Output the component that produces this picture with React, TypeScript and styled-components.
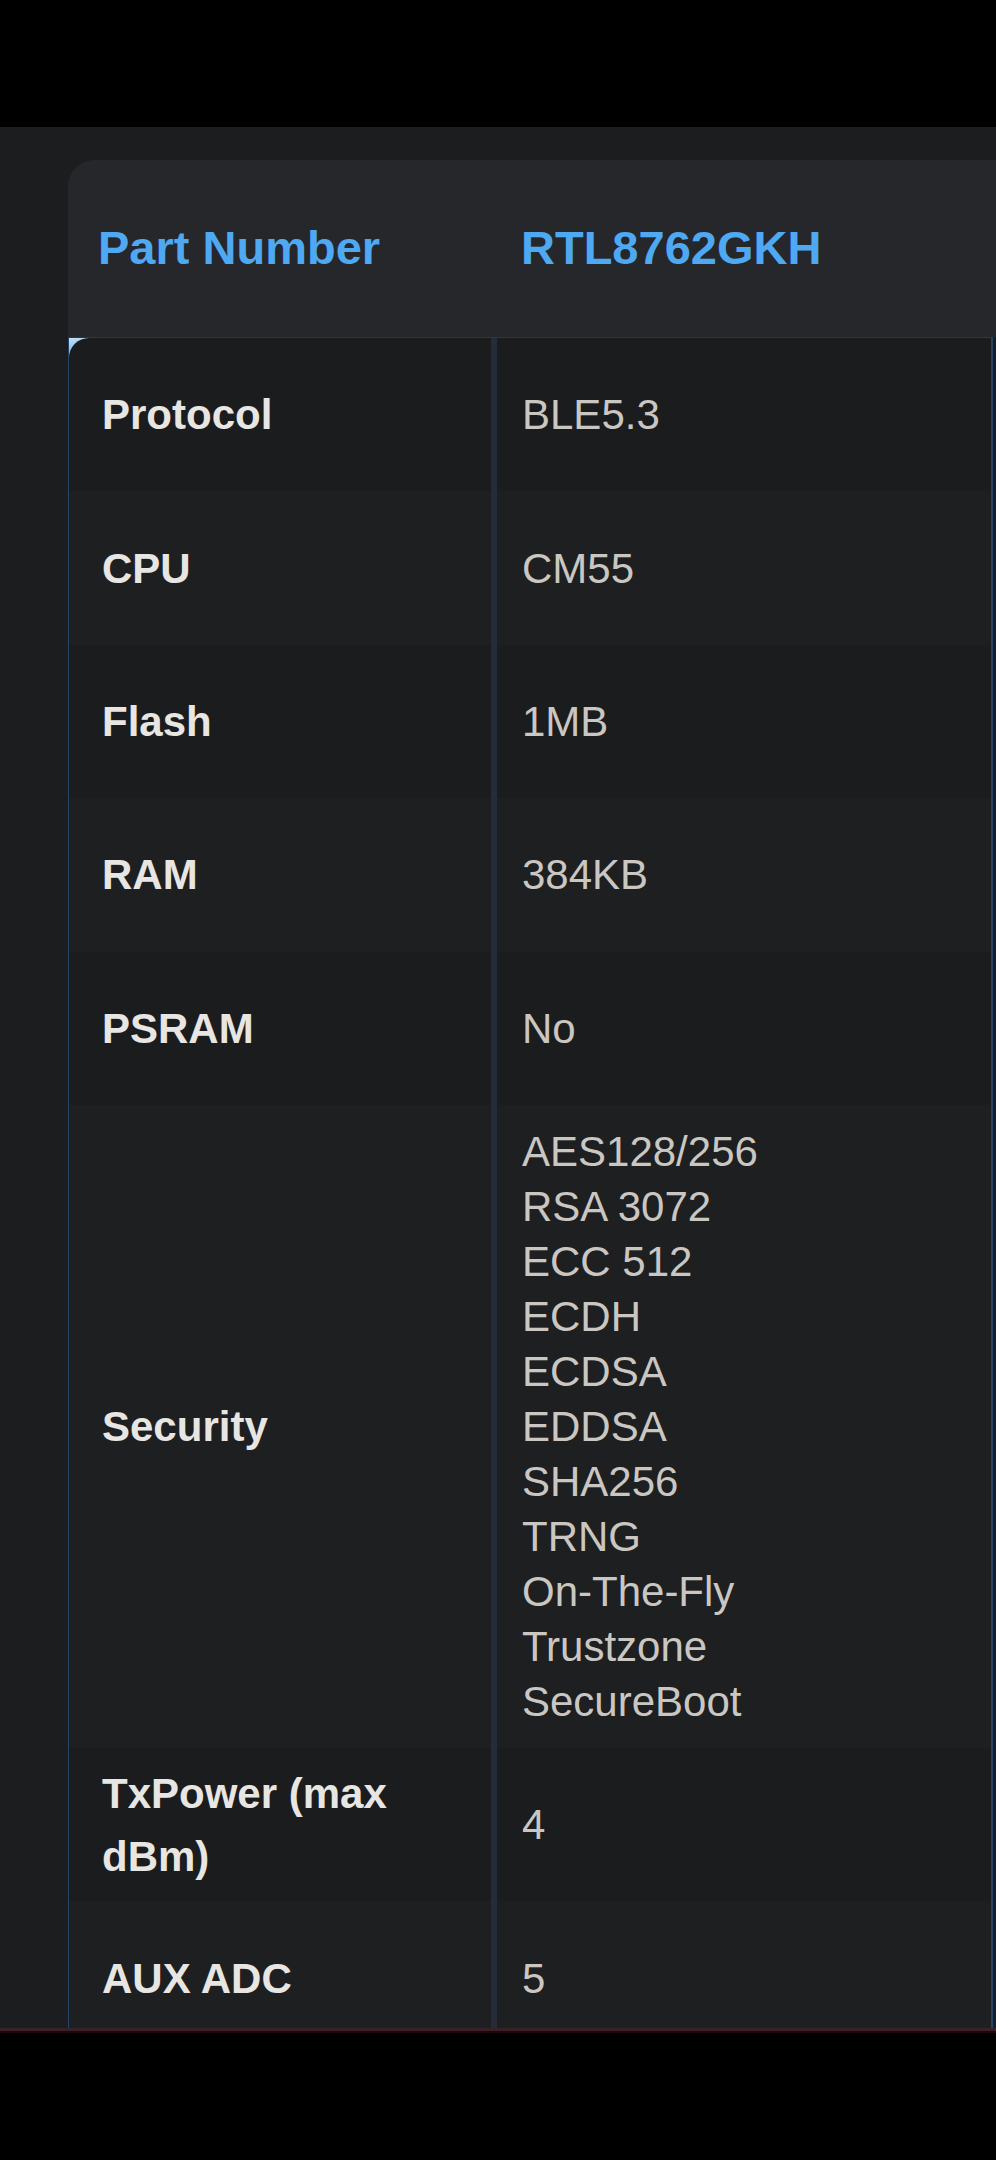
import React from "react";
import styled, { createGlobalStyle } from "styled-components";

const GlobalStyle = createGlobalStyle`
  *, *::before, *::after { box-sizing: border-box; }
  html, body { margin: 0; padding: 0; background: #000; }
  body { font-family: "Liberation Sans", Arial, sans-serif; }
`;

const Page = styled.div`
  display: flex;
  flex-direction: column;
  min-height: 2160px;
  background: #000;
`;

const TopBar = styled.div`
  height: 127px;
  background: #000;
`;

const Viewport = styled.main`
  height: 1904px;
  overflow: hidden;
  background: #1c1d1f;
  padding: 33px 0 0 68px;
  border-bottom: 3px solid #3a2027;
  box-shadow: 0 2px 0 #1e070b;
`;

const Card = styled.section`
  display: flex;
  flex-direction: column;
  width: 940px;
`;

const HeaderRow = styled.div`
  display: grid;
  grid-template-columns: 423px 1fr;
  align-items: center;
  height: 177px;
  background: #26272a;
  border-top-left-radius: 26px;
`;

const HeaderCell = styled.div`
  padding-left: 30px;
  font-size: 47px;
  font-weight: 700;
  color: #4ea8f2;
  line-height: 1.2;
`;

const Body = styled.div`
  position: relative;
  display: flex;
  flex-direction: column;
  width: 925px;
  border-top: 1px solid #1f3a58;
  border-left: 1px solid #23456a;
  border-right: 2px solid #23456a;

  &::before {
    content: "";
    position: absolute;
    top: 0;
    left: 0;
    width: 22px;
    height: 26px;
    background: linear-gradient(165deg, #c2e2fb 0%, #8cc0ea 40%, #2d5a86 100%);
    z-index: 0;
  }
`;

const Row = styled.div<{ $alt: boolean; $first?: boolean }>`
  position: relative;
  z-index: 1;
  display: grid;
  grid-template-columns: 428px 1fr;
  min-height: 153.4px;
  background: ${(p) => (p.$alt ? "#1e1f21" : "#1b1c1e")};
  border-top-left-radius: ${(p) => (p.$first ? "20px" : "0")};
`;

const LabelCell = styled.div`
  display: flex;
  align-items: center;
  padding: 12px 33px;
  border-right: 6px solid #232c37;
  font-size: 42px;
  font-weight: 700;
  line-height: 63px;
  color: #e8e6e3;
`;

const ValueCell = styled.div`
  display: flex;
  flex-direction: column;
  justify-content: center;
  padding: 19px 25px;
  font-size: 42px;
  line-height: 55px;
  color: #cac7c2;
`;

const rows: { label: string; value: string[] }[] = [
  { label: "Protocol", value: ["BLE5.3"] },
  { label: "CPU", value: ["CM55"] },
  { label: "Flash", value: ["1MB"] },
  { label: "RAM", value: ["384KB"] },
  { label: "PSRAM", value: ["No"] },
  {
    label: "Security",
    value: [
      "AES128/256",
      "RSA 3072",
      "ECC 512",
      "ECDH",
      "ECDSA",
      "EDDSA",
      "SHA256",
      "TRNG",
      "On-The-Fly",
      "Trustzone",
      "SecureBoot",
    ],
  },
  { label: "TxPower (max dBm)", value: ["4"] },
  { label: "AUX ADC", value: ["5"] },
];

export default function App() {
  return (
    <>
      <GlobalStyle />
      <Page>
        <TopBar />
        <Viewport>
          <Card>
            <HeaderRow>
              <HeaderCell>Part Number</HeaderCell>
              <HeaderCell>RTL8762GKH</HeaderCell>
            </HeaderRow>
            <Body>
              {rows.map((r, i) => (
                <Row key={r.label} $alt={i % 2 === 1} $first={i === 0}>
                  <LabelCell>{r.label}</LabelCell>
                  <ValueCell>
                    {r.value.map((v) => (
                      <span key={v}>{v}</span>
                    ))}
                  </ValueCell>
                </Row>
              ))}
            </Body>
          </Card>
        </Viewport>
      </Page>
    </>
  );
}
